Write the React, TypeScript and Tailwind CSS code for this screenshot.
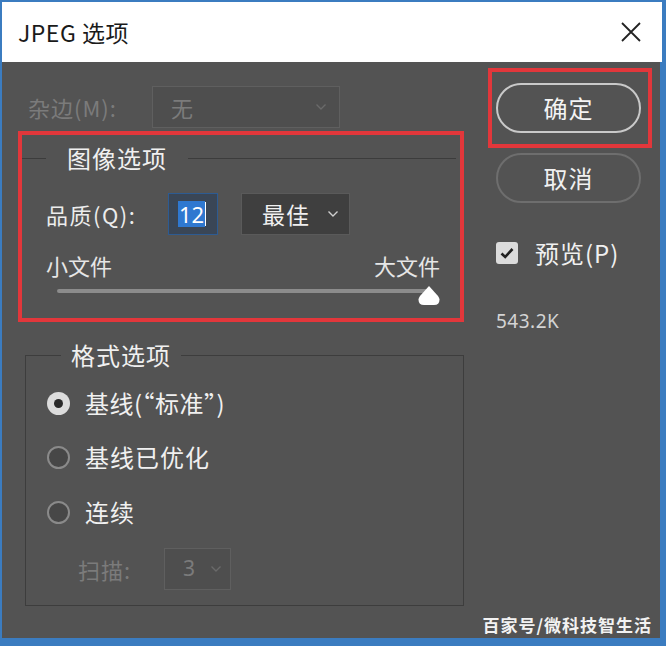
import React from "react";

const FONT = { fontFamily: '"Noto Sans CJK SC", "Noto Sans", sans-serif' };

function Chevron({ className = "" }: { className?: string }) {
  return (
    <svg width="12" height="8" viewBox="0 0 12 8" className={className}>
      <path d="M1.5 1.5 L6 6 L10.5 1.5" fill="none" stroke="currentColor" strokeWidth="1.4" />
    </svg>
  );
}

function Radio({ checked }: { checked?: boolean }) {
  return checked ? (
    <div className="w-[23px] h-[23px] rounded-full bg-[#dcdcdc] flex items-center justify-center shrink-0">
      <div className="w-[9px] h-[9px] rounded-full bg-[#2a2a2a]" />
    </div>
  ) : (
    <div className="w-[23px] h-[23px] rounded-full border-2 border-[#8a8a8a] bg-[#474747] shrink-0" />
  );
}

export default function App() {
  return (
    <div
      className="w-[666px] h-[646px] bg-[#3b7cc0] pl-[2px] pt-[2px] pr-[4px] pb-[8px] flex flex-col relative overflow-hidden"
      style={FONT}
    >
      {/* Title bar */}
      <div className="h-[60px] bg-white flex items-center justify-between pl-[16px] pr-[20px] shrink-0">
        <span className="text-[23px] text-[#1a1a1a] leading-none tracking-[0.5px]">JPEG 选项</span>
        <svg width="22" height="22" viewBox="0 0 22 22">
          <path d="M2 2 L20 20 M20 2 L2 20" stroke="#222" strokeWidth="1.8" fill="none" />
        </svg>
      </div>

      {/* Body */}
      <div className="flex-1 bg-[#535353] flex mr-[2px]">
        {/* Left column */}
        <div className="w-[464px] flex flex-col shrink-0">
          {/* 杂边 row */}
          <div className="flex items-center mt-[24px] pl-[26px] h-[42px]">
            <span className="text-[22px] text-[#7b7b7b] w-[124px] tracking-[1px]">杂边(M):</span>
            <div className="w-[188px] h-[42px] border border-[#5f5f5f] bg-[#4e4e4e] flex items-center justify-between pl-[18px] pr-[12px] text-[#7b7b7b]">
              <span className="text-[22px]">无</span>
              <Chevron className="text-[#6a6a6a]" />
            </div>
          </div>

          {/* Red box: image options */}
          <div className="mt-[3px] ml-[16px] w-[446px] h-[191px] border-4 border-[#e2373b] flex flex-col">
            <div className="flex items-center mt-[8px] h-[30px]">
              <div className="w-[24px] h-px bg-[#3c3c3c]" />
              <span className="text-[24px] text-[#f0f0f0] px-[21px] leading-none tracking-[1px]">图像选项</span>
              <div className="flex-1 h-px bg-[#3c3c3c] mr-[4px]" />
            </div>
            <div className="flex items-center mt-[20px] pl-[24px] h-[42px]">
              <span className="text-[22px] text-[#ececec] w-[122px] tracking-[1.5px]">品质(Q):</span>
              <div className="w-[50px] h-[42px] bg-[#3a4656] border border-[#2d5b92] flex items-center pl-[9px]">
                <span className="bg-[#2f78d0] text-white text-[22px] leading-[26px] px-[1px]" style={{ fontFamily: '"Noto Sans", sans-serif' }}>12</span>
                <span className="w-px h-[24px] bg-white" />
              </div>
              <div className="ml-[23px] w-[109px] h-[42px] bg-[#3f3f3f] border border-[#5a5a5a] flex items-center justify-between pl-[20px] pr-[10px] text-[#f0f0f0]">
                <span className="text-[23px] tracking-[1px]">最佳</span>
                <Chevron className="text-[#cfcfcf]" />
              </div>
            </div>
            <div className="flex justify-between items-center mt-[16px] pl-[24px] pr-[20px] h-[28px] text-[22px] text-[#e6e6e6]">
              <span>小文件</span>
              <span>大文件</span>
            </div>
            <div className="relative mt-[6px] ml-[35px] w-[373px] h-[20px]">
              <div className="absolute left-0 right-0 top-[4px] h-[4px] rounded-full bg-[#8c8c8c]" />
              <svg width="22" height="19" viewBox="0 0 22 19" className="absolute right-[-10px] top-[1px]">
                <path d="M11 0 L20 10 Q21.5 12 21.5 13.5 Q21.5 19 16 19 L6 19 Q0.5 19 0.5 13.5 Q0.5 12 2 10 Z" fill="#ffffff" />
              </svg>
            </div>
          </div>

          {/* Format options */}
          <fieldset className="mt-[18px] ml-[23px] w-[439px] h-[266px] border border-[#3d3d3d] flex flex-col">
            <legend className="ml-[35px] px-[10px] text-[24px] text-[#f0f0f0] leading-[30px] tracking-[1px]">格式选项</legend>
            <div className="flex flex-col pl-[21px]">
              <div className="flex items-center h-[30px] mt-[18px]">
                <Radio checked />
                <span className="ml-[15px] text-[24px] text-[#f0f0f0] tracking-[0.5px]">基线(“标准”)</span>
              </div>
              <div className="flex items-center h-[30px] mt-[24px]">
                <Radio />
                <span className="ml-[15px] text-[24px] text-[#f0f0f0] tracking-[1px]">基线已优化</span>
              </div>
              <div className="flex items-center h-[30px] mt-[25px]">
                <Radio />
                <span className="ml-[15px] text-[24px] text-[#f0f0f0] tracking-[1px]">连续</span>
              </div>
              <div className="flex items-center mt-[21px] h-[42px] pl-[31px]">
                <span className="text-[22px] text-[#7b7b7b] w-[86px] tracking-[1px]">扫描:</span>
                <div className="w-[67px] h-[42px] border border-[#5f5f5f] bg-[#4e4e4e] flex items-center justify-between pl-[18px] pr-[8px] text-[#7b7b7b]">
                  <span className="text-[21px]" style={{ fontFamily: '"Noto Sans", sans-serif' }}>3</span>
                  <Chevron className="text-[#6a6a6a]" />
                </div>
              </div>
            </div>
          </fieldset>
        </div>

        {/* Right column */}
        <div className="flex flex-col pl-[22px]">
          <div className="mt-[6px] w-[164px] h-[80px] border-4 border-[#e2373b] pl-[4px] pt-[11px]">
            <div className="w-[145px] h-[50px] rounded-full border-2 border-[#c9c9c9] flex items-center justify-center text-[24px] text-[#f4f4f4] tracking-[1px]">
              确定
            </div>
          </div>
          <div className="mt-[5px] ml-[8px] w-[145px] h-[50px] rounded-full border-2 border-[#6e6e6e] flex items-center justify-center text-[24px] text-[#f0f0f0] tracking-[1px]">
            取消
          </div>
          <div className="flex items-center mt-[38px] ml-[8px] h-[24px]">
            <div className="w-[22px] h-[22px] rounded-[3px] bg-[#dcdcdc] flex items-center justify-center">
              <svg width="14" height="12" viewBox="0 0 14 12">
                <path d="M1.5 6.5 L5.2 10 L12.5 2" fill="none" stroke="#222" strokeWidth="2.6" />
              </svg>
            </div>
            <span className="ml-[17px] text-[24px] text-[#f0f0f0] tracking-[1px]">预览(P)</span>
          </div>
          <div className="mt-[42px] ml-[8px] text-[19px] text-[#d4d4d4] tracking-[0.5px]" style={{ fontFamily: '"Noto Sans", sans-serif' }}>
            543.2K
          </div>
        </div>
      </div>

      {/* Watermark */}
      <div className="absolute right-[14px] bottom-[9px] text-[17px] font-bold text-[#f2f2f2] tracking-[1px]">
        百家号/微科技智生活
      </div>
    </div>
  );
}
